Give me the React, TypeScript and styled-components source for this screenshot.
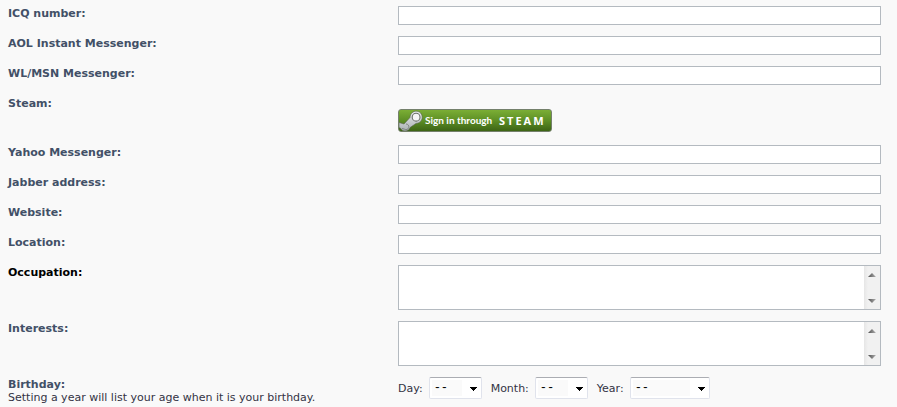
import React from "react";
import styled, { createGlobalStyle } from "styled-components";

const GlobalStyle = createGlobalStyle`
  body {
    margin: 0;
    background: #f9f9f9;
    color: #333344;
    font: 11px/13px Verdana, "DejaVu Sans", sans-serif;
  }
`;

const Form = styled.form`
  display: flex;
  flex-direction: column;
  gap: 11px;
  padding: 6px 16px 8px 8px;
`;

const Row = styled.div`
  display: grid;
  grid-template-columns: 390fr 483fr;
  align-items: start;
`;

const Caption = styled.div`
  padding-top: 1px;
`;

const Label = styled.label<{ $changed?: boolean }>`
  display: block;
  font-weight: bold;
  color: ${(p) => (p.$changed ? "#000000" : "#425067")};
`;

const TextInput = styled.input`
  box-sizing: border-box;
  width: 100%;
  height: 19px;
  padding: 2px;
  border: 1px solid #b4bac0;
  border-radius: 0;
  background: #ffffff;
  color: #333333;
  font: inherit;
`;

const AreaFrame = styled.div`
  box-sizing: border-box;
  display: flex;
  height: 45px;
  border: 1px solid #b4bac0;
  background: #ffffff;
`;

const TextArea = styled.textarea`
  flex: 1;
  min-width: 0;
  padding: 2px;
  border: 0;
  resize: none;
  overflow: hidden;
  background: transparent;
  color: #333333;
  font: inherit;
`;

const ScrollTrack = styled.div`
  display: flex;
  flex-direction: column;
  justify-content: space-between;
  width: 16px;
  background: linear-gradient(90deg, #e6e6e6, #f1f1f1 4px, #f1f1f1);
`;

const ScrollButton = styled.button`
  display: flex;
  align-items: center;
  justify-content: center;
  height: 17px;
  padding: 0;
  border: 0;
  background: transparent;
`;

const SteamSlot = styled.div`
  padding: 13px 0 2px;
`;

const SteamButton = styled.button`
  box-sizing: border-box;
  display: flex;
  align-items: center;
  width: 154px;
  height: 23px;
  padding: 0;
  border: 1px solid #74806b;
  border-radius: 3px;
  overflow: hidden;
  background: linear-gradient(#7bae35, #5d8f25 50%, #3d6415);
  color: #ffffff;
  white-space: nowrap;
`;

const SteamPhrase = styled.span`
  width: 74px;
  padding-left: 2px;
  text-align: left;
  font: bold 10px/21px Lato, sans-serif;
`;

const SteamWord = styled.span`
  font: bold 11px/19px "Open Sans", sans-serif;
  letter-spacing: 2px;
`;

const DateFields = styled.div`
  display: flex;
  align-items: center;
  gap: 9px;
`;

const DateField = styled.label`
  display: flex;
  align-items: center;
  gap: 6px;
`;

const SelectFrame = styled.span<{ $wide?: boolean }>`
  position: relative;
  width: ${(p) => (p.$wide ? 80 : 53)}px;
  height: 22px;
`;

const Select = styled.select`
  box-sizing: border-box;
  display: block;
  width: 100%;
  height: 22px;
  padding: 0 20px 0 4px;
  appearance: none;
  border: 1px solid #e0e3ec;
  border-top-color: #abadb3;
  border-radius: 2px;
  background: linear-gradient(#fafafa, #fafafa) 2px 2px / calc(100% - 21px) 16px no-repeat #ffffff;
  color: #000000;
  font: 12px/13px "Liberation Mono", monospace;
`;

const SelectArrow = styled.svg`
  position: absolute;
  top: 10px;
  right: 5px;
  pointer-events: none;
`;

function Emblem() {
  return (
    <svg width="24" height="21" viewBox="0 0 24 21" aria-hidden="true">
      <defs>
        <linearGradient id="metal" x1="0" y1="0" x2="0" y2="1">
          <stop offset="0" stopColor="#e9ebeb" />
          <stop offset="1" stopColor="#a9b0b3" />
        </linearGradient>
      </defs>
      <path
        d="M0 12.5 L5 14 L11 7.5 C11.2 3.6 14 1.2 17.2 1.2 C20.8 1.2 23.2 4 23.2 7.2 C23.2 10.8 20.3 13.3 17 13.4 L11 17.6 C10.5 20 8.5 21 6 21 C3.5 21 2.3 19.5 1.8 18.4 L0 17.6 Z"
        fill="url(#metal)"
        stroke="#596350"
        strokeWidth=".6"
      />
      <circle cx="17.1" cy="7.2" r="3.9" fill="#f5f5f5" stroke="#6b706a" strokeWidth="1.1" />
      <path d="M3 18.4 L5.6 19.2 A2.8 2.8 0 1 0 7 14" fill="none" stroke="#798079" strokeWidth="0.9" />
    </svg>
  );
}

function Arrow({ up = false }: { up?: boolean }) {
  const id = up ? "arrow-up" : "arrow-down";
  return (
    <svg width="8" height="4" viewBox="0 0 8 4" aria-hidden="true">
      <defs>
        <linearGradient id={id}>
          <stop offset="0" stopColor="#505050" />
          <stop offset="1" stopColor="#b0b0b0" />
        </linearGradient>
      </defs>
      <path d={up ? "M4 0L8 4H0z" : "M0 0H8L4 4z"} fill={`url(#${id})`} />
    </svg>
  );
}

function TextRow({ id, label }: { id: string; label: string }) {
  return (
    <Row>
      <Caption>
        <Label htmlFor={id}>{label}</Label>
      </Caption>
      <TextInput id={id} name={id} type="text" />
    </Row>
  );
}

function AreaRow({ id, label, changed }: { id: string; label: string; changed?: boolean }) {
  return (
    <Row>
      <Caption>
        <Label htmlFor={id} $changed={changed}>{label}</Label>
      </Caption>
      <AreaFrame>
        <TextArea id={id} name={id} />
        <ScrollTrack>
          <ScrollButton type="button" aria-label="Scroll up">
            <Arrow up />
          </ScrollButton>
          <ScrollButton type="button" aria-label="Scroll down">
            <Arrow />
          </ScrollButton>
        </ScrollTrack>
      </AreaFrame>
    </Row>
  );
}

function DateSelect({ label, id, wide }: { label: string; id: string; wide?: boolean }) {
  return (
    <DateField htmlFor={id}>
      {label}
      <SelectFrame $wide={wide}>
        <Select id={id} name={id}>
          <option>--</option>
        </Select>
        <SelectArrow width="7" height="4" viewBox="0 0 7 4" shapeRendering="crispEdges" aria-hidden="true">
          <path d="M0 0h7v1H6v1H5v1H4v1H3V3H2V2H1V1H0z" />
        </SelectArrow>
      </SelectFrame>
    </DateField>
  );
}

export default function App() {
  return (
    <>
      <GlobalStyle />
      <Form>
        <TextRow id="icq" label="ICQ number:" />
        <TextRow id="aim" label="AOL Instant Messenger:" />
        <TextRow id="msn" label="WL/MSN Messenger:" />
        <Row>
          <Caption>
            <Label htmlFor="steam">Steam:</Label>
          </Caption>
          <SteamSlot>
            <SteamButton id="steam" type="button">
              <Emblem />
              <SteamPhrase>Sign in through</SteamPhrase>
              <SteamWord>STEAM</SteamWord>
            </SteamButton>
          </SteamSlot>
        </Row>
        <TextRow id="yahoo" label="Yahoo Messenger:" />
        <TextRow id="jabber" label="Jabber address:" />
        <TextRow id="website" label="Website:" />
        <TextRow id="location" label="Location:" />
        <AreaRow id="occupation" label="Occupation:" changed />
        <AreaRow id="interests" label="Interests:" />
        <Row>
          <Caption>
            <Label htmlFor="day">Birthday:</Label>
            <span>Setting a year will list your age when it is your birthday.</span>
          </Caption>
          <DateFields>
            <DateSelect id="day" label="Day:" />
            <DateSelect id="month" label="Month:" />
            <DateSelect id="year" label="Year:" wide />
          </DateFields>
        </Row>
      </Form>
    </>
  );
}
